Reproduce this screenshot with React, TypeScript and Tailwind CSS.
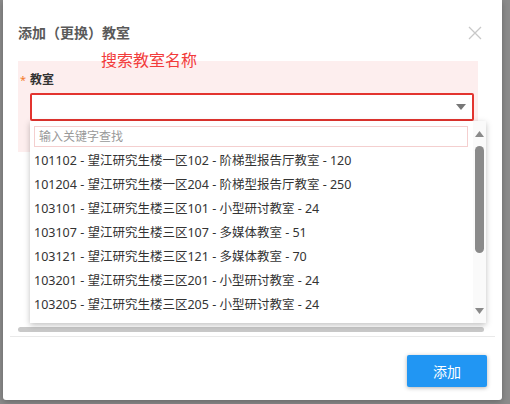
import React from "react";

const items = [
  "101102 - 望江研究生楼一区102 - 阶梯型报告厅教室 - 120",
  "101204 - 望江研究生楼一区204 - 阶梯型报告厅教室 - 250",
  "103101 - 望江研究生楼三区101 - 小型研讨教室 - 24",
  "103107 - 望江研究生楼三区107 - 多媒体教室 - 51",
  "103121 - 望江研究生楼三区121 - 多媒体教室 - 70",
  "103201 - 望江研究生楼三区201 - 小型研讨教室 - 24",
  "103205 - 望江研究生楼三区205 - 小型研讨教室 - 24",
];

export default function App() {
  return (
    <div
      className="w-[510px] h-[404px] bg-[#8b8b8b] overflow-hidden pl-[3px] flex"
      style={{ fontFamily: '"Noto Sans", "Noto Sans CJK SC", sans-serif' }}
    >
      <div className="relative w-[499px] h-[400px] bg-white rounded-b-[3px] flex flex-col shadow-[0_2px_6px_rgba(0,0,0,0.25)]">
        {/* header */}
        <div className="h-[61px] flex justify-between items-start pt-[24px] pl-[15px] pr-[20px]">
          <div className="text-[14px] leading-[18px] font-bold text-[#5a5a5a]">添加（更换）教室</div>
          <svg width="14" height="14" viewBox="0 0 14 14" className="mt-[2px]">
            <path d="M1 1 L13 13 M13 1 L1 13" stroke="#c8c8c8" strokeWidth="1.3" />
          </svg>
        </div>

        {/* form area */}
        <div className="ml-[15px] w-[460px] h-[91px] bg-[#fdeeee] pt-[12px]">
          <div className="flex items-center h-[14px]">
            <span className="w-[12px] pl-[2px] text-[#f47a2a] text-[11px] leading-[14px]">*</span>
            <span className="text-[12px] leading-[14px] font-bold text-[#333]">教室</span>
          </div>
          <div className="ml-[12px] mt-[6px] w-[444px] h-[28px] bg-white border-2 border-[#e3342f] rounded-[2px] flex items-center justify-end pr-[6px]">
            <svg width="10" height="6" viewBox="0 0 10 6">
              <path d="M0 0 L10 0 L5 6 Z" fill="#777" />
            </svg>
          </div>
        </div>

        {/* horizontal scrollbar */}
        <div className="mt-[175px] ml-[15px] w-[466px] h-[5px] rounded-full bg-[#c9c9c9]" />
        {/* separator */}
        <div className="mt-[4px] mx-[7px] h-px bg-[#e9e9e9]" />
        {/* footer */}
        <div className="flex justify-end pr-[15px] pt-[18px]">
          <button className="w-[80px] h-[32px] bg-[#2196f3] text-white text-[14px] rounded-[2px] shadow-[0_1px_4px_rgba(0,0,0,0.3)]">
            添加
          </button>
        </div>

        {/* annotation */}
        <div className="absolute left-[98px] top-[50px] text-[16px] leading-[20px] text-[#f23b3b]">
          搜索教室名称
        </div>

        {/* dropdown */}
        <div className="absolute left-[27px] top-[121px] w-[456px] h-[202px] bg-white shadow-[0_2px_6px_rgba(0,0,0,0.25)] flex">
          <div className="flex-1 flex flex-col pl-[4px] pt-[5px]">
            <div className="w-[434px] h-[21px] border border-[#f4cfcf] flex items-center pl-[4px] text-[12px] text-[#999]">
              输入关键字查找
            </div>
            <div className="mt-[2px] flex flex-col">
              {items.map((t) => (
                <div key={t} className="h-[24px] flex items-center text-[12.5px] text-[#333] whitespace-nowrap">
                  {t}
                </div>
              ))}
            </div>
          </div>
          <div className="w-[13px] bg-[#fafafa] flex flex-col items-center pt-[10px] pb-[9px]">
            <svg width="9" height="6" viewBox="0 0 9 6">
              <path d="M4.5 0 L9 6 L0 6 Z" fill="#8a8a8a" />
            </svg>
            <div className="mt-[9px] w-[9px] h-[107px] rounded-full bg-[#8a8a8a]" />
            <div className="flex-1" />
            <svg width="9" height="6" viewBox="0 0 9 6">
              <path d="M0 0 L9 0 L4.5 6 Z" fill="#8a8a8a" />
            </svg>
          </div>
        </div>
      </div>
    </div>
  );
}
